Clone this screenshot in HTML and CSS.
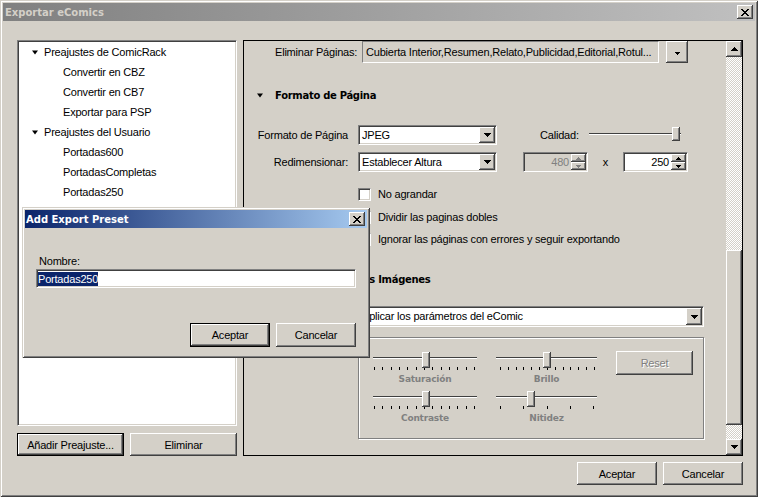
FILE: index.html
```html
<!DOCTYPE html>
<html lang="es">
<head>
<meta charset="utf-8">
<title>Exportar eComics</title>
<link rel="stylesheet" href="styles.css">
</head>
<body>
<div class="window">
  <div class="titlebar inactive">
    <span class="title">Exportar eComics</span>
    <span class="tbtn"><svg width="8" height="7" viewBox="0 0 8 7" shape-rendering="crispEdges"><path d="M0 0h2v1H0zM6 0h2v1H6zM1 1h2v1H1zM5 1h2v1H5zM2 2h4v1H2zM3 3h2v1H3zM2 4h4v1H2zM1 5h2v1H1zM5 5h2v1H5zM0 6h2v1H0zM6 6h2v1H6z"/></svg></span>
  </div>
  <div class="client">
    <div class="main">
      <div class="leftcol">
        <div class="tree">
          <div class="node"><svg width="6" height="5" viewBox="0 0 6 5"><polygon points="0,0.5 6,0.5 3,4.5"/></svg>Preajustes de ComicRack</div>
          <div class="leaf">Convertir en CBZ</div>
          <div class="leaf">Convertir en CB7</div>
          <div class="leaf">Exportar para PSP</div>
          <div class="node"><svg width="6" height="5" viewBox="0 0 6 5"><polygon points="0,0.5 6,0.5 3,4.5"/></svg>Preajustes del Usuario</div>
          <div class="leaf">Portadas600</div>
          <div class="leaf">PortadasCompletas</div>
          <div class="leaf">Portadas250</div>
        </div>
        <div class="leftbtns">
          <button class="btn default">Añadir Preajuste...</button>
          <button class="btn">Eliminar</button>
        </div>
      </div>
      <div class="panel">
        <div class="content">
          <div class="r-elim">
            <span class="elbl">Eliminar Páginas:</span>
            <div class="ro-box">Cubierta Interior,Resumen,Relato,Publicidad,Editorial,Rotul...</div>
            <span class="btn ddbtn"><svg width="5" height="3" viewBox="0 0 5 3" shape-rendering="crispEdges"><path d="M0 0h5v1H0zM1 1h3v1H1zM2 2h1v1H2z"/></svg></span>
          </div>
          <div class="heading h-fmt"><svg width="6" height="5" viewBox="0 0 6 5"><polygon points="0,0.5 6,0.5 3,4.5"/></svg>Formato de Página</div>
          <div class="frow r-fmt">
            <span class="flbl">Formato de Página</span>
            <div class="combo w139"><span class="val">JPEG</span><span class="btn cbtn"><svg width="7" height="4" viewBox="0 0 7 4" shape-rendering="crispEdges"><path d="M0 0h7v1H0zM1 1h5v1H1zM2 2h3v1H2zM3 3h1v1H3z"/></svg></span></div>
            <span class="cal-lbl">Calidad:</span>
            <div class="hslider"><div class="hline"></div><div class="thumb sm" style="left:83px"></div></div>
          </div>
          <div class="frow r-res">
            <span class="flbl">Redimensionar:</span>
            <div class="combo w139"><span class="val">Establecer Altura</span><span class="btn cbtn"><svg width="7" height="4" viewBox="0 0 7 4" shape-rendering="crispEdges"><path d="M0 0h7v1H0zM1 1h5v1H1zM2 2h3v1H2zM3 3h1v1H3z"/></svg></span></div>
            <div class="spin dis s1">
              <span class="num">480</span>
              <span class="sbtns">
                <span class="btn sb"><svg width="5" height="3" viewBox="0 0 5 3" shape-rendering="crispEdges"><path d="M2 0h1v1H2zM1 1h3v1H1zM0 2h5v1H0z"/></svg></span>
                <span class="btn sb"><svg width="5" height="3" viewBox="0 0 5 3" shape-rendering="crispEdges"><path d="M0 0h5v1H0zM1 1h3v1H1zM2 2h1v1H2z"/></svg></span>
              </span>
            </div>
            <span class="xsep">x</span>
            <div class="spin">
              <span class="num">250</span>
              <span class="sbtns">
                <span class="btn sb"><svg width="5" height="3" viewBox="0 0 5 3" shape-rendering="crispEdges"><path d="M2 0h1v1H2zM1 1h3v1H1zM0 2h5v1H0z"/></svg></span>
                <span class="btn sb"><svg width="5" height="3" viewBox="0 0 5 3" shape-rendering="crispEdges"><path d="M0 0h5v1H0zM1 1h3v1H1zM2 2h1v1H2z"/></svg></span>
              </span>
            </div>
          </div>
          <div class="crow c1"><span class="chk"></span>No agrandar</div>
          <div class="crow c2"><span class="chk"></span>Dividir las paginas dobles</div>
          <div class="crow c3"><span class="chk"></span>Ignorar las páginas con errores y seguir exportando</div>
          <div class="heading h-img"><svg width="6" height="5" viewBox="0 0 6 5"><polygon points="0,0.5 6,0.5 3,4.5"/></svg>Tratamiento de las Imágenes</div>
          <div class="r-img">
            <div class="combo w346"><span class="val">Aplicar los parámetros del eComic</span><span class="btn cbtn"><svg width="7" height="4" viewBox="0 0 7 4" shape-rendering="crispEdges"><path d="M0 0h7v1H0zM1 1h5v1H1zM2 2h3v1H2zM3 3h1v1H3z"/></svg></span></div>
          </div>
          <div class="group">
            <div class="sl">
              <div class="track"><div class="hline"></div><div class="thumb" style="left:49px"></div></div>
              <div class="ticks t13a"><i></i><i></i><i></i><i></i><i></i><i></i><i></i><i></i><i></i><i></i><i></i><i></i><i></i></div>
              <div class="sl-lbl">Saturación</div>
            </div>
            <div class="sl">
              <div class="track"><div class="hline"></div><div class="thumb" style="left:47px"></div></div>
              <div class="ticks t13b"><i></i><i></i><i></i><i></i><i></i><i></i><i></i><i></i><i></i><i></i><i></i><i></i><i></i></div>
              <div class="sl-lbl">Brillo</div>
            </div>
            <button class="btn reset">Reset</button>
            <div class="sl">
              <div class="track"><div class="hline"></div><div class="thumb" style="left:49px"></div></div>
              <div class="ticks t13a"><i></i><i></i><i></i><i></i><i></i><i></i><i></i><i></i><i></i><i></i><i></i><i></i><i></i></div>
              <div class="sl-lbl">Contraste</div>
            </div>
            <div class="sl">
              <div class="track"><div class="hline"></div><div class="thumb" style="left:31px"></div></div>
              <div class="ticks t5"><i></i><i></i><i></i><i></i><i></i></div>
              <div class="sl-lbl">Nitidez</div>
            </div>
          </div>
        </div>
        <div class="vscroll">
          <span class="btn sbb"><svg width="7" height="4" viewBox="0 0 7 4" shape-rendering="crispEdges"><path d="M3 0h1v1H3zM2 1h3v1H2zM1 2h5v1H1zM0 3h7v1H0z"/></svg></span>
          <div class="strack top"></div>
          <div class="btn sthumb"></div>
          <div class="strack end"></div>
          <span class="btn sbb"><svg width="7" height="4" viewBox="0 0 7 4" shape-rendering="crispEdges"><path d="M0 0h7v1H0zM1 1h5v1H1zM2 2h3v1H2zM3 3h1v1H3z"/></svg></span>
        </div>
      </div>
    </div>
    <div class="footer">
      <button class="btn">Aceptar</button>
      <button class="btn">Cancelar</button>
    </div>
  </div>

  <div class="dialog">
    <div class="titlebar active">
      <span class="title">Add Export Preset</span>
      <span class="tbtn"><svg width="8" height="7" viewBox="0 0 8 7" shape-rendering="crispEdges"><path d="M0 0h2v1H0zM6 0h2v1H6zM1 1h2v1H1zM5 1h2v1H5zM2 2h4v1H2zM3 3h2v1H3zM2 4h4v1H2zM1 5h2v1H1zM5 5h2v1H5zM0 6h2v1H0zM6 6h2v1H6z"/></svg></span>
    </div>
    <div class="dlg-body">
      <div class="dlg-lbl">Nombre:</div>
      <div class="dlg-input"><span class="sel">Portadas250</span></div>
      <div class="dlg-btns">
        <button class="btn default">Aceptar</button>
        <button class="btn">Cancelar</button>
      </div>
    </div>
  </div>
</div>
</body>
</html>
```

FILE: styles.css
```css
* { box-sizing: border-box; }
html, body { margin: 0; padding: 0; }
body {
  width: 758px;
  height: 497px;
  overflow: hidden;
  background: #d4d0c8;
  font-family: "Liberation Sans", Arial, sans-serif;
  font-size: 11px;
  letter-spacing: -0.2px;
  color: #000;
}
svg { display: block; fill: #000; }

.window {
  position: relative;
  width: 758px;
  height: 497px;
  padding: 3px;
  display: flex;
  flex-direction: column;
  background: #d4d0c8;
  box-shadow: inset 1px 1px #d4d0c8, inset -1px -1px #404040, inset 2px 2px #fff, inset -2px -2px #808080;
}

/* title bars */
.titlebar {
  height: 18px;
  flex: none;
  display: flex;
  align-items: center;
  justify-content: space-between;
  padding: 0 2px;
  font-family: "DejaVu Sans", sans-serif;
  font-weight: bold;
  font-size: 10px;
  letter-spacing: 0;
  white-space: nowrap;
}
.titlebar.inactive { background: linear-gradient(to right, #808080, #c0c0c0); color: #d4d0c8; }
.titlebar.active { background: linear-gradient(to right, #0a246a, #a6caf0); color: #fff; }
.tbtn {
  width: 16px;
  height: 14px;
  display: flex;
  align-items: center;
  justify-content: center;
  background: #d4d0c8;
  box-shadow: inset -1px -1px #404040, inset 1px 1px #fff, inset -2px -2px #808080;
}

/* buttons */
.btn {
  appearance: none;
  margin: 0;
  padding: 0;
  border: none;
  font: inherit;
  letter-spacing: inherit;
  color: #000;
  background: #d4d0c8;
  box-shadow: inset -1px -1px #404040, inset 1px 1px #fff, inset -2px -2px #808080;
  display: flex;
  align-items: center;
  justify-content: center;
  flex: none;
}
.btn.default {
  box-shadow: inset 0 0 0 1px #000, inset -2px -2px #404040, inset 2px 2px #fff, inset -3px -3px #808080;
}

.client {
  flex: 1;
  display: flex;
  flex-direction: column;
  padding: 19px 12px 0 14px;
}
.main {
  height: 416px;
  flex: none;
  display: flex;
  gap: 6px;
}

/* left column */
.leftcol {
  width: 220px;
  display: flex;
  flex-direction: column;
  gap: 7px;
}
.tree {
  height: 386px;
  background: #fff;
  border: 1px solid;
  border-color: #808080 #fff #fff #808080;
  box-shadow: inset 1px 1px #404040, inset -1px -1px #d4d0c8;
  padding-top: 1px;
}
.node, .leaf {
  height: 20px;
  line-height: 20px;
  white-space: nowrap;
}
.node { display: flex; align-items: center; padding-left: 14px; }
.node svg { margin-right: 6px; }
.leaf { padding-left: 45px; }
.leftbtns { display: flex; gap: 6px; }
.leftbtns .btn { width: 107px; height: 23px; }

/* right panel */
.panel {
  width: 500px;
  border: 1px solid #000;
  display: flex;
}
.content {
  flex: 1;
  overflow: hidden;
  display: flex;
  flex-direction: column;
  white-space: nowrap;
}
.r-elim {
  height: 22px;
  flex: none;
  display: flex;
  align-items: center;
  padding-left: 31px;
}
.elbl { width: 87px; }
.ro-box {
  width: 297px;
  height: 22px;
  line-height: 20px;
  padding-left: 3px;
  border: 1px solid;
  border-color: #808080 #fff #fff #808080;
  overflow: hidden;
}
.ddbtn { width: 22px; height: 22px; margin-left: 7px; padding-top: 2px; }

.heading {
  height: 20px;
  flex: none;
  display: flex;
  align-items: center;
  padding-left: 13px;
  font-family: "DejaVu Sans", sans-serif;
  font-weight: bold;
  font-size: 10px;
  letter-spacing: -0.3px;
}
.heading svg { margin-right: 12px; }
.h-fmt { margin-top: 22px; }
.h-img { margin-top: 19px; }

.frow { height: 20px; flex: none; display: flex; align-items: center; }
.r-fmt { margin-top: 20px; }
.r-res { margin-top: 7px; }
.flbl { width: 104px; margin-right: 10px; text-align: right; }

.combo {
  height: 20px;
  flex: none;
  display: flex;
  align-items: stretch;
  padding: 1px;
  background: #fff;
  border: 1px solid;
  border-color: #808080 #fff #fff #808080;
  box-shadow: inset 1px 1px #404040, inset -1px -1px #d4d0c8;
}
.combo .val { flex: 1; padding-left: 2px; line-height: 16px; overflow: hidden; }
.combo .cbtn { width: 16px; }
.w139 { width: 139px; }
.w346 { width: 346px; height: 21px; }

.cal-lbl { width: 37px; margin-left: 43px; }
.hslider { position: relative; width: 92px; height: 14px; margin-left: 12px; }
.hline {
  position: absolute;
  left: 0;
  right: 0;
  top: 5px;
  height: 2px;
  border-top: 1px solid #404040;
  border-bottom: 1px solid #fff;
}
.thumb {
  position: absolute;
  top: 0;
  width: 8px;
  height: 16px;
  background: #d4d0c8;
  box-shadow: inset -1px -1px #404040, inset 1px 1px #fff, inset -2px -2px #808080;
}
.thumb.sm { top: -1px; height: 14px; }

.spin {
  width: 65px;
  height: 20px;
  flex: none;
  display: flex;
  padding: 1px;
  background: #fff;
  border: 1px solid;
  border-color: #808080 #fff #fff #808080;
  box-shadow: inset 1px 1px #404040, inset -1px -1px #d4d0c8;
}
.spin.s1 { margin-left: 26px; }
.spin.dis { background: #d4d0c8; }
.spin .num { flex: 1; text-align: right; padding-right: 2px; line-height: 16px; }
.spin.dis .num { color: #808080; }
.spin.dis svg { fill: #808080; }
.sbtns { width: 15px; display: flex; flex-direction: column; }
.sb { height: 8px; }
.xsep { width: 35px; text-align: center; }

.crow {
  height: 22px;
  flex: none;
  display: flex;
  align-items: center;
  padding-left: 114px;
}
.c1 { margin-top: 11px; }
.c2 { margin-top: 1px; }
.chk {
  width: 13px;
  height: 13px;
  margin-right: 7px;
  background: #fff;
  border: 1px solid;
  border-color: #808080 #fff #fff #808080;
  box-shadow: inset 1px 1px #404040, inset -1px -1px #d4d0c8;
}

.r-img { margin-top: 17px; padding-left: 114px; flex: none; }

.group {
  margin-top: 10px;
  margin-left: 114px;
  width: 346px;
  height: 102px;
  flex: none;
  border: 1px solid #808080;
  box-shadow: inset 1px 1px #fff, 1px 1px #fff;
  padding: 14px 0 0 14px;
  display: grid;
  grid-template-columns: 104px 101px 77px;
  column-gap: 19px;
  row-gap: 6px;
  align-content: start;
  align-items: start;
}
.sl { display: flex; flex-direction: column; }
.track { position: relative; height: 16px; }
.ticks {
  display: flex;
  justify-content: space-between;
  height: 3px;
  margin-top: -1px;
}
.ticks i { width: 1px; height: 3px; background: #000; }
.t13a { padding: 0 2px 0 1px; }
.t13b { padding: 0 2px 0 4px; }
.t5 { padding: 0 3px 0 4px; }
.sl-lbl {
  margin-top: 3px;
  height: 12px;
  line-height: 12px;
  text-align: center;
  font-family: "DejaVu Sans", sans-serif;
  font-weight: bold;
  font-size: 9px;
  letter-spacing: -0.2px;
  color: #808080;
}
.reset {
  grid-column: 3;
  grid-row: 1;
  height: 24px;
  margin-top: -1px;
  color: #808080;
  text-shadow: 1px 1px #fff;
}

/* scrollbar */
.vscroll { width: 16px; flex: none; display: flex; flex-direction: column; }
.sbb { height: 16px; }
.strack {
  flex: none;
  background: repeating-conic-gradient(#fff 0 25%, #d4d0c8 0 50%) 0 0 / 2px 2px;
}
.strack.top { height: 193px; }
.strack.end { flex: 1; }
.sthumb { height: 175px; }

/* footer */
.footer {
  flex: 1;
  display: flex;
  justify-content: flex-end;
  align-items: flex-start;
  gap: 6px;
  padding-top: 6px;
}
.footer .btn { width: 80px; height: 23px; }

/* dialog */
.dialog {
  position: absolute;
  left: 22px;
  top: 207px;
  width: 348px;
  height: 151px;
  padding: 3px;
  display: flex;
  flex-direction: column;
  background: #d4d0c8;
  box-shadow: inset 1px 1px #d4d0c8, inset -1px -1px #404040, inset 2px 2px #fff, inset -2px -2px #808080;
}
.dialog .titlebar { padding-left: 1px; }
.dlg-body {
  flex: 1;
  display: flex;
  flex-direction: column;
  padding: 27px 11px 0 11px;
}
.dlg-lbl { height: 12px; line-height: 12px; padding-left: 3px; }
.dlg-input {
  margin-top: 2px;
  height: 19px;
  display: flex;
  align-items: center;
  padding: 0 1px;
  background: #fff;
  border: 1px solid;
  border-color: #808080 #fff #fff #808080;
  box-shadow: inset 1px 1px #404040, inset -1px -1px #d4d0c8;
}
.sel { background: #0a246a; color: #fff; line-height: 14px; }
.dlg-btns { margin-top: 35px; display: flex; justify-content: flex-end; gap: 6px; }
.dlg-btns .btn { width: 80px; height: 24px; }
```
